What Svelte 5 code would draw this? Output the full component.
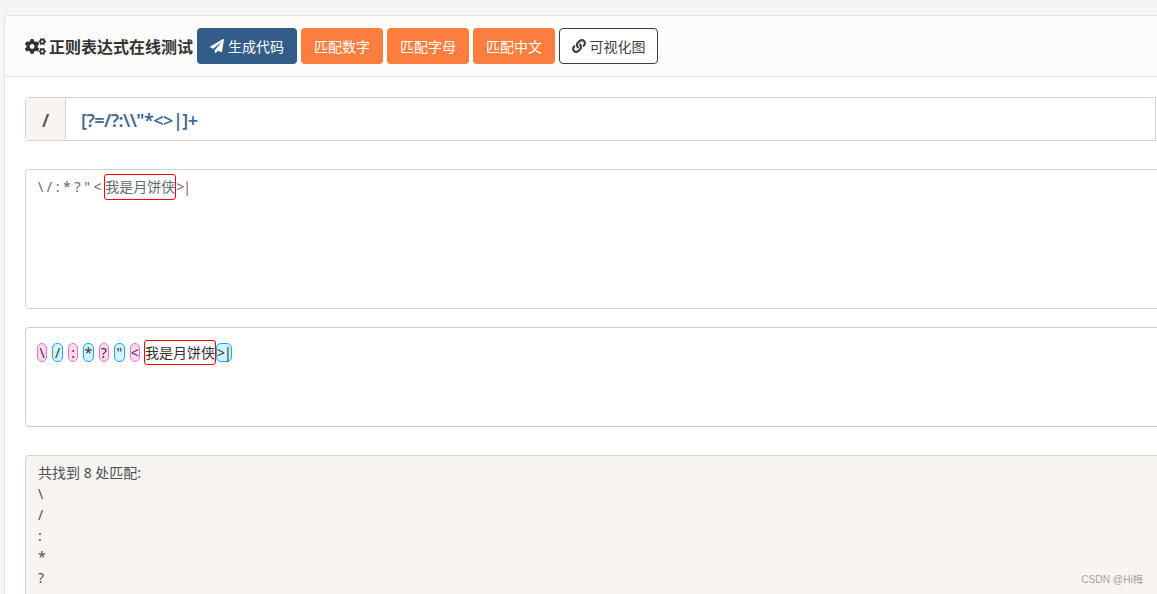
<script>
  const pattern = '[?=/?:\\\\"*<>|]+';
  const matches = ['\\', '/', ':', '*', '?'];
  const tokens = ['\\', '/', ':', '*', '?', '"', '<'];
</script>

<div class="page">
  <section class="card">
    <header class="card-head">
      <h1>
        <svg class="ico-cogs" viewBox="0 0 640 512" aria-hidden="true"><path fill="currentColor" d="M512.1 191l-8.2 14.3c-3 5.3-9.4 7.5-15.1 5.4-11.8-4.4-22.6-10.7-32.1-18.6-4.6-3.8-5.8-10.5-2.8-15.7l8.2-14.3c-6.9-8-12.3-17.3-15.9-27.4h-16.5c-6 0-11.2-4.3-12.2-10.3-2-12-2.1-24.6 0-37.1 1-6 6.2-10.4 12.2-10.4h16.5c3.6-10.1 9-19.4 15.9-27.4l-8.2-14.3c-3-5.2-1.9-11.9 2.8-15.7 9.5-7.9 20.4-14.2 32.1-18.6 5.7-2.1 12.1.1 15.1 5.4l8.2 14.3c10.5-1.9 21.2-1.9 31.7 0L552 6.3c3-5.3 9.4-7.5 15.1-5.4 11.8 4.4 22.6 10.7 32.1 18.6 4.6 3.8 5.8 10.5 2.8 15.7l-8.2 14.3c6.9 8 12.3 17.3 15.9 27.4h16.5c6 0 11.2 4.3 12.2 10.3 2 12 2.1 24.6 0 37.1-1 6-6.2 10.4-12.2 10.4h-16.5c-3.6 10.1-9 19.4-15.9 27.4l8.2 14.3c3 5.2 1.9 11.9-2.8 15.7-9.5 7.9-20.4 14.2-32.1 18.6-5.7 2.1-12.1-.1-15.1-5.4l-8.2-14.3c-10.4 1.9-21.2 1.9-31.7 0zm-10.5-58.8c38.5 29.6 82.4-14.3 52.8-52.8-38.5-29.7-82.4 14.3-52.8 52.8zM386.3 286.1l33.7 16.8c10.1 5.8 14.5 18.1 10.5 29.1-8.9 24.2-26.4 46.4-42.6 65.8-7.4 8.9-20.2 11.1-30.3 5.3l-29.1-16.8c-16 13.7-34.6 24.6-54.9 31.7v33.6c0 11.6-8.3 21.6-19.7 23.6-24.6 4.2-50.4 4.4-75.9 0-11.5-2-20-11.9-20-23.6V418c-20.3-7.2-38.9-18-54.9-31.7L74 403c-10 5.8-22.9 3.6-30.3-5.3-16.2-19.4-33.3-41.6-42.2-65.7-4-10.9.4-23.2 10.5-29.1l33.3-16.8c-3.9-20.9-3.9-42.4 0-63.4L12 205.8c-10.1-5.8-14.6-18.1-10.5-29 8.9-24.2 26-46.4 42.2-65.8 7.4-8.9 20.2-11.1 30.3-5.3l29.1 16.8c16-13.7 34.6-24.6 54.9-31.7V57.1c0-11.5 8.2-21.5 19.6-23.5 24.6-4.2 50.5-4.4 76-.1 11.5 2 20 11.9 20 23.6v33.6c20.3 7.2 38.9 18 54.9 31.7l29.1-16.8c10-5.8 22.9-3.6 30.3 5.3 16.2 19.4 33.2 41.6 42.1 65.8 4 10.9.1 23.2-10 29.1l-33.7 16.8c3.9 21 3.9 42.5 0 63.5zm-117.6 21.1c59.2-77-28.7-164.9-105.7-105.7-59.2 77 28.7 164.9 105.7 105.7zm243.4 182.7l-8.2 14.3c-3 5.3-9.4 7.5-15.1 5.4-11.8-4.4-22.6-10.7-32.1-18.6-4.6-3.8-5.8-10.5-2.8-15.7l8.2-14.3c-6.9-8-12.3-17.3-15.9-27.4h-16.5c-6 0-11.2-4.3-12.2-10.3-2-12-2.1-24.6 0-37.1 1-6 6.2-10.4 12.2-10.4h16.5c3.6-10.1 9-19.4 15.9-27.4l-8.2-14.3c-3-5.2-1.9-11.9 2.8-15.7 9.5-7.9 20.4-14.2 32.1-18.6 5.7-2.1 12.1.1 15.1 5.4l8.2 14.3c10.5-1.9 21.2-1.9 31.7 0l8.2-14.3c3-5.3 9.4-7.5 15.1-5.4 11.8 4.4 22.6 10.7 32.1 18.6 4.6 3.8 5.8 10.5 2.8 15.7l-8.2 14.3c6.9 8 12.3 17.3 15.9 27.4h16.5c6 0 11.2 4.3 12.2 10.3 2 12 2.1 24.6 0 37.1-1 6-6.2 10.4-12.2 10.4h-16.5c-3.6 10.1-9 19.4-15.9 27.4l8.2 14.3c3 5.2 1.9 11.9-2.8 15.7-9.5 7.9-20.4 14.2-32.1 18.6-5.7 2.1-12.1-.1-15.1-5.4l-8.2-14.3c-10.4 1.9-21.2 1.9-31.7 0zM501.6 431c38.5 29.6 82.4-14.3 52.8-52.8-38.5-29.6-82.4 14.3-52.8 52.8z"/></svg>
        正则表达式在线测试
      </h1>
      <button class="btn primary">
        <svg class="ico" viewBox="0 0 512 512" aria-hidden="true"><path fill="currentColor" d="M476 3.2L12.5 270.6c-18.1 10.4-15.8 35.6 2.2 43.2L121 358.4l287.3-253.2c5.5-4.9 13.3 2.6 8.6 8.3L176 407v80.5c0 23.6 28.5 32.9 42.5 15.8L282 426l124.6 52.2c14.2 6 30.4-2.9 33-18.2l72-432C515 7.8 493.3-6.8 476 3.2z"/></svg>
        生成代码
      </button>
      <button class="btn orange">匹配数字</button>
      <button class="btn orange">匹配字母</button>
      <button class="btn orange">匹配中文</button>
      <button class="btn outline">
        <svg class="ico" viewBox="0 0 512 512" aria-hidden="true"><path fill="currentColor" d="M326.612 185.391c59.747 59.809 58.927 155.698.36 214.59-.11.12-.24.25-.36.37l-67.2 67.2c-59.27 59.27-155.699 59.262-214.96 0-59.27-59.26-59.27-155.7 0-214.96l37.106-37.106c9.84-9.84 26.786-3.3 27.294 10.606.648 17.722 3.826 35.527 9.69 52.721 1.986 5.822.567 12.262-3.783 16.612l-13.087 13.087c-28.026 28.026-28.905 73.66-1.155 101.96 28.024 28.579 74.086 28.749 102.325.51l67.2-67.19c28.191-28.191 28.073-73.757 0-101.83-3.701-3.694-7.429-6.564-10.341-8.569a16.037 16.037 0 0 1-6.947-12.606c-.396-10.567 3.348-21.456 11.698-29.806l21.054-21.055c5.521-5.521 14.182-6.199 20.584-1.731a152.482 152.482 0 0 1 20.522 17.197zM467.547 44.449c-59.261-59.262-155.69-59.27-214.96 0l-67.2 67.2c-.12.12-.25.25-.36.37-58.566 58.892-59.387 154.781.36 214.59a152.454 152.454 0 0 0 20.521 17.196c6.402 4.468 15.064 3.789 20.584-1.731l21.054-21.055c8.35-8.35 12.094-19.239 11.698-29.806a16.037 16.037 0 0 0-6.947-12.606c-2.912-2.005-6.64-4.875-10.341-8.569-28.073-28.073-28.191-73.639 0-101.83l67.2-67.19c28.239-28.239 74.3-28.069 102.325.51 27.75 28.3 26.872 73.934-1.155 101.96l-13.087 13.087c-4.35 4.35-5.769 10.79-3.783 16.612 5.864 17.194 9.042 34.999 9.69 52.721.509 13.906 17.454 20.446 27.294 10.606l37.106-37.106c59.271-59.259 59.271-155.699.001-214.959z"/></svg>
        可视化图
      </button>
    </header>

    <div class="card-body">
      <div class="regex">
        <span class="slash">/</span>
        <span class="regex-value">{pattern}</span>
      </div>

      <div class="box source">\ / : * ? " &lt; <span class="mark">我是月饼侠</span>&gt;<span class="caret">|</span></div>

      <div class="box preview">
        {#each tokens as t, i}
          <span class="pill tok" class:pink={i % 2 === 0} class:blue={i % 2 === 1}>{t}</span>{' '}
        {/each}<span class="mark">我是月饼侠</span><span class="pill tail blue">&gt;|</span>
      </div>

      <div class="result">
        <div>共找到 8 处匹配:</div>
        {#each matches as m}
          <div>{m}</div>
        {/each}
      </div>
    </div>
  </section>

  <span class="watermark">CSDN @Hi梅</span>
</div>

<style>
  :global(body) {
    margin: 0;
    background: #f5f5f5;
    overflow: hidden;
  }

  .page {
    position: relative;
    height: 594px;
    overflow: hidden;
    padding: 15px 0 0 4px;
    box-sizing: border-box;
    font-family: "Noto Sans", "Noto Sans CJK SC", sans-serif;
    font-size: 14px;
    color: #333;
  }

  .card {
    width: 1180px;
    background: #fff;
    border: 1px solid #e8e4da;
    border-radius: 4px;
    height: 640px;
  }

  .card-head {
    display: flex;
    align-items: center;
    gap: 4px;
    height: 60px;
    padding: 0 20px;
    background: #fdfcfa;
    border-bottom: 1px solid #e8e4da;
    border-radius: 4px 4px 0 0;
  }

  h1 {
    display: flex;
    align-items: center;
    gap: 3px;
    margin: 0;
    font-size: 16px;
    font-weight: 700;
    color: #333;
  }

  .ico-cogs {
    width: 21px;
    height: 17px;
  }

  .ico {
    flex: none;
    width: 14px;
    height: 14px;
  }

  .btn {
    display: inline-flex;
    align-items: center;
    justify-content: center;
    gap: 4px;
    height: 36px;
    padding: 0;
    border: 1px solid transparent;
    border-radius: 4px;
    font: inherit;
    font-size: 14px;
    box-sizing: border-box;
    white-space: nowrap;
  }

  .primary {
    width: 100px;
    background: #325d88;
    color: #fff;
  }

  .orange {
    width: 82px;
    background: #f97e40;
    color: #fff;
  }

  .outline {
    width: 99px;
    background: #fff;
    border-color: #3e3f3a;
    color: #3e3f3a;
  }

  .card-body {
    padding: 20px 0 0 20px;
  }

  .regex {
    display: flex;
    width: 1131px;
    height: 44px;
    box-sizing: border-box;
    border: 1px solid #ced4da;
    border-radius: 4px 0 0 4px;
    align-items: stretch;
  }

  .slash {
    display: flex;
    align-items: center;
    justify-content: center;
    width: 39px;
    padding-top: 2px;
    background: #f8f5f0;
    border-right: 1px solid #ced4da;
    font-size: 18px;
    font-weight: 600;
    color: #495057;
  }

  .regex-value {
    display: flex;
    align-items: center;
    padding: 2px 0 0 15px;
    font-size: 18px;
    font-weight: 600;
    letter-spacing: -0.5px;
    color: #3f6a94;
  }

  .box {
    margin-top: 28px;
    box-sizing: border-box;
    border: 1px solid #ced4da;
    border-radius: 4px;
    padding: 4px 12px;
    background: #fff;
  }

  .source {
    height: 140px;
    line-height: 24px;
    color: #5f6b76;
  }

  .source .mark {
    margin-left: -1px;
  }

  .preview {
    margin-top: 18px;
    height: 100px;
    padding: 12px 11px 0;
    line-height: 25px;
    color: #333;
    border-color: #ccc;
  }

  .mark {
    display: inline-block;
    border: 1px solid #f00;
    border-radius: 3px;
    line-height: 23px;
    padding-bottom: 1px;
  }

  .preview .mark {
    margin-left: -1px;
    padding-bottom: 0;
  }

  .caret {
    margin-left: -1px;
    color: #b5545c;
  }

  .pill {
    display: inline-block;
    line-height: 17px;
    border-radius: 5px;
    border: 1px solid;
    color: #333;
  }

  .tok {
    box-sizing: border-box;
    width: 10.4px;
    margin-right: 1.4px;
    text-align: center;
  }

  .tail {
    letter-spacing: -1px;
  }

  .pink {
    background: #ffd9f3;
    border-color: #f26fc8;
  }

  .blue {
    background: #cff3ff;
    border-color: #1ea7fd;
  }

  .result {
    margin-top: 28px;
    box-sizing: border-box;
    border: 1px solid #ced4da;
    border-radius: 4px;
    padding: 6px 12px;
    height: 200px;
    background: #f8f5f0;
    color: #495057;
    line-height: 21px;
  }

  .watermark {
    position: absolute;
    right: 14px;
    bottom: 8px;
    font-family: "Liberation Sans", "Noto Sans CJK SC", sans-serif;
    font-size: 10.2px;
    color: #a3a3a3;
  }
</style>
